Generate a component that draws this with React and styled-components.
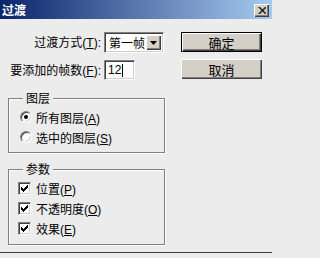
import React from "react";
import styled, { createGlobalStyle } from "styled-components";

const GlobalStyle = createGlobalStyle`
  html, body {
    margin: 0;
    padding: 0;
    background: #ececec;
  }
  body {
    font-family: "Liberation Sans", "Noto Sans CJK SC", sans-serif;
    font-size: 12px;
    color: #000;
  }
`;

const Window = styled.div`
  width: 272px;
  height: 258px;
  display: flex;
  flex-direction: column;
  background: #ececec;
  overflow: hidden;
`;

const TitleBar = styled.div`
  height: 19px;
  flex: none;
  display: flex;
  align-items: center;
  justify-content: space-between;
  padding: 0 3px 0 2px;
  background: linear-gradient(to right, #0a246a, #a6caf0);
`;

const Title = styled.span`
  color: #fff;
  font-weight: bold;
  font-size: 12px;
  font-family: "Noto Sans CJK SC", sans-serif;
  line-height: 14px;
`;

const CloseButton = styled.div`
  width: 15px;
  height: 13px;
  margin-top: 2px;
  background: #d4d0c8;
  box-shadow: inset 1px 1px #fff, inset -1px -1px #404040, inset -2px -2px #808080;
  display: flex;
  align-items: center;
  justify-content: center;
`;

const Body = styled.div`
  flex: 1;
  padding: 13px 0 0 8px;
  border-bottom: 1px solid #404040;
  margin-bottom: 5px;
`;

const TopSection = styled.div`
  display: flex;
  align-items: flex-start;
`;

const Form = styled.div`
  width: 157px;
  display: grid;
  grid-template-columns: 93px auto;
  column-gap: 3px;
  row-gap: 7px;
  align-items: center;
`;

const Label = styled.span`
  justify-self: end;
  white-space: nowrap;
  font-family: "Noto Sans CJK SC", sans-serif;
  line-height: 14px;
`;

const Combo = styled.div`
  width: 60px;
  height: 21px;
  box-sizing: border-box;
  background: #fff;
  border: 1px solid;
  border-color: #808080 #fff #fff #808080;
  box-shadow: inset 1px 1px #404040, inset -1px -1px #d4d0c8;
  display: flex;
  align-items: stretch;
  padding: 2px;
`;

const ComboText = styled.span`
  flex: 1;
  padding-left: 2px;
  line-height: 15px;
  font-family: "Noto Sans CJK SC", sans-serif;
`;

const ComboArrow = styled.div`
  width: 15px;
  background: #d4d0c8;
  box-shadow: inset 1px 1px #fff, inset -1px -1px #404040, inset -2px -2px #808080;
  display: flex;
  align-items: center;
  justify-content: center;
`;

const TextInput = styled.div`
  width: 31px;
  height: 20px;
  box-sizing: border-box;
  background: #fff;
  border: 1px solid;
  border-color: #808080 #fff #fff #808080;
  box-shadow: inset 1px 1px #404040, inset -1px -1px #d4d0c8;
  display: flex;
  align-items: center;
  padding-left: 3px;
`;

const Caret = styled.span`
  width: 1px;
  height: 13px;
  background: #000;
  margin-left: 1px;
`;

const ButtonColumn = styled.div`
  display: flex;
  flex-direction: column;
  gap: 7px;
  margin-left: 16px;
`;

const Button = styled.div`
  width: 81px;
  height: 20px;
  box-sizing: border-box;
  background: #d4d0c8;
  border: ${(p) => (p.$default ? "1px solid #000" : "none")};
  box-shadow: inset 1px 1px #fff, inset -1px -1px #404040, inset -2px -2px #808080;
  display: flex;
  align-items: center;
  justify-content: center;
  font-family: "Noto Sans CJK SC", sans-serif;
  font-size: 13px;
`;

const GroupBox = styled.div`
  position: relative;
  width: 157px;
  height: ${(p) => p.$height}px;
  box-sizing: border-box;
  margin-top: ${(p) => p.$top}px;
  border: 1px solid #808080;
  box-shadow: inset 1px 1px #fff, 1px 1px #fff;
  padding: 8px 0 0 0;
  display: flex;
  flex-direction: column;
`;

const Legend = styled.span`
  position: absolute;
  top: -8px;
  left: 14px;
  padding: 0 3px;
  background: #ececec;
  line-height: 14px;
  font-family: "Noto Sans CJK SC", sans-serif;
`;

const OptionRow = styled.div`
  height: 20px;
  display: flex;
  align-items: center;
  padding-left: ${(p) => p.$indent}px;
  gap: ${(p) => p.$gap}px;
  font-family: "Noto Sans CJK SC", sans-serif;
  white-space: nowrap;
`;

const Radio = styled.span`
  width: 12px;
  height: 12px;
  box-sizing: border-box;
  border-radius: 50%;
  border: 1px solid;
  border-color: #808080 #fff #fff #808080;
  box-shadow: inset 1px 1px #404040, inset -1px -1px #d4d0c8;
  background: #fff;
  display: flex;
  align-items: center;
  justify-content: center;
  &::after {
    content: "";
    width: 4px;
    height: 4px;
    border-radius: 50%;
    background: ${(p) => (p.$checked ? "#000" : "transparent")};
  }
`;

const Check = styled.span`
  width: 13px;
  height: 13px;
  box-sizing: border-box;
  border: 1px solid;
  border-color: #808080 #fff #fff #808080;
  box-shadow: inset 1px 1px #404040, inset -1px -1px #d4d0c8;
  background: #fff;
  display: flex;
  align-items: center;
  justify-content: center;
`;

const Latin = styled.span`
  font-family: "Liberation Sans", sans-serif;
`;

const Mnemonic = ({ k, colon }) => (
  <Latin>
    (<u>{k}</u>){colon ? ":" : ""}
  </Latin>
);

const CheckBox = ({ label, k }) => (
  <OptionRow $indent={9} $gap={5}>
    <Check>
      <svg width="7" height="7" viewBox="0 0 7 7" shapeRendering="crispEdges">
        <path d="M0 2h1v3h-1z M1 3h1v3h-1z M2 4h1v3h-1z M3 3h1v3h-1z M4 2h1v3h-1z M5 1h1v3h-1z M6 0h1v3h-1z" fill="#000" />
      </svg>
    </Check>
    <span>
      {label}
      <Mnemonic k={k} />
    </span>
  </OptionRow>
);

const RadioOption = ({ label, k, checked }) => (
  <OptionRow $indent={11} $gap={4}>
    <Radio $checked={checked} />
    <span>
      {label}
      <Mnemonic k={k} />
    </span>
  </OptionRow>
);

export default function App() {
  return (
    <Window>
      <GlobalStyle />
      <TitleBar>
        <Title>过渡</Title>
        <CloseButton>
          <svg width="8" height="7" viewBox="0 0 8 7">
            <path d="M0.5 0 L7.5 7 M1.5 0 L8.5 7 M7.5 0 L0.5 7 M8.5 0 L1.5 7" stroke="#000" strokeWidth="1" />
          </svg>
        </CloseButton>
      </TitleBar>
      <Body>
        <TopSection>
          <Form>
            <Label>
              过渡方式<Mnemonic k="T" colon />
            </Label>
            <Combo>
              <ComboText>第一帧</ComboText>
              <ComboArrow>
                <svg width="7" height="4" viewBox="0 0 7 4">
                  <path d="M0 0 H7 L3.5 4 Z" fill="#000" />
                </svg>
              </ComboArrow>
            </Combo>
            <Label>
              要添加的帧数<Mnemonic k="F" colon />
            </Label>
            <TextInput>
              <Latin>12</Latin>
              <Caret />
            </TextInput>
          </Form>
          <ButtonColumn>
            <Button $default>确定</Button>
            <Button>取消</Button>
          </ButtonColumn>
        </TopSection>
        <GroupBox $top={18} $height={55}>
          <Legend>图层</Legend>
          <RadioOption label="所有图层" k="A" checked />
          <RadioOption label="选中的图层" k="S" />
        </GroupBox>
        <GroupBox $top={16} $height={76}>
          <Legend>参数</Legend>
          <CheckBox label="位置" k="P" />
          <CheckBox label="不透明度" k="O" />
          <CheckBox label="效果" k="E" />
        </GroupBox>
      </Body>
    </Window>
  );
}
